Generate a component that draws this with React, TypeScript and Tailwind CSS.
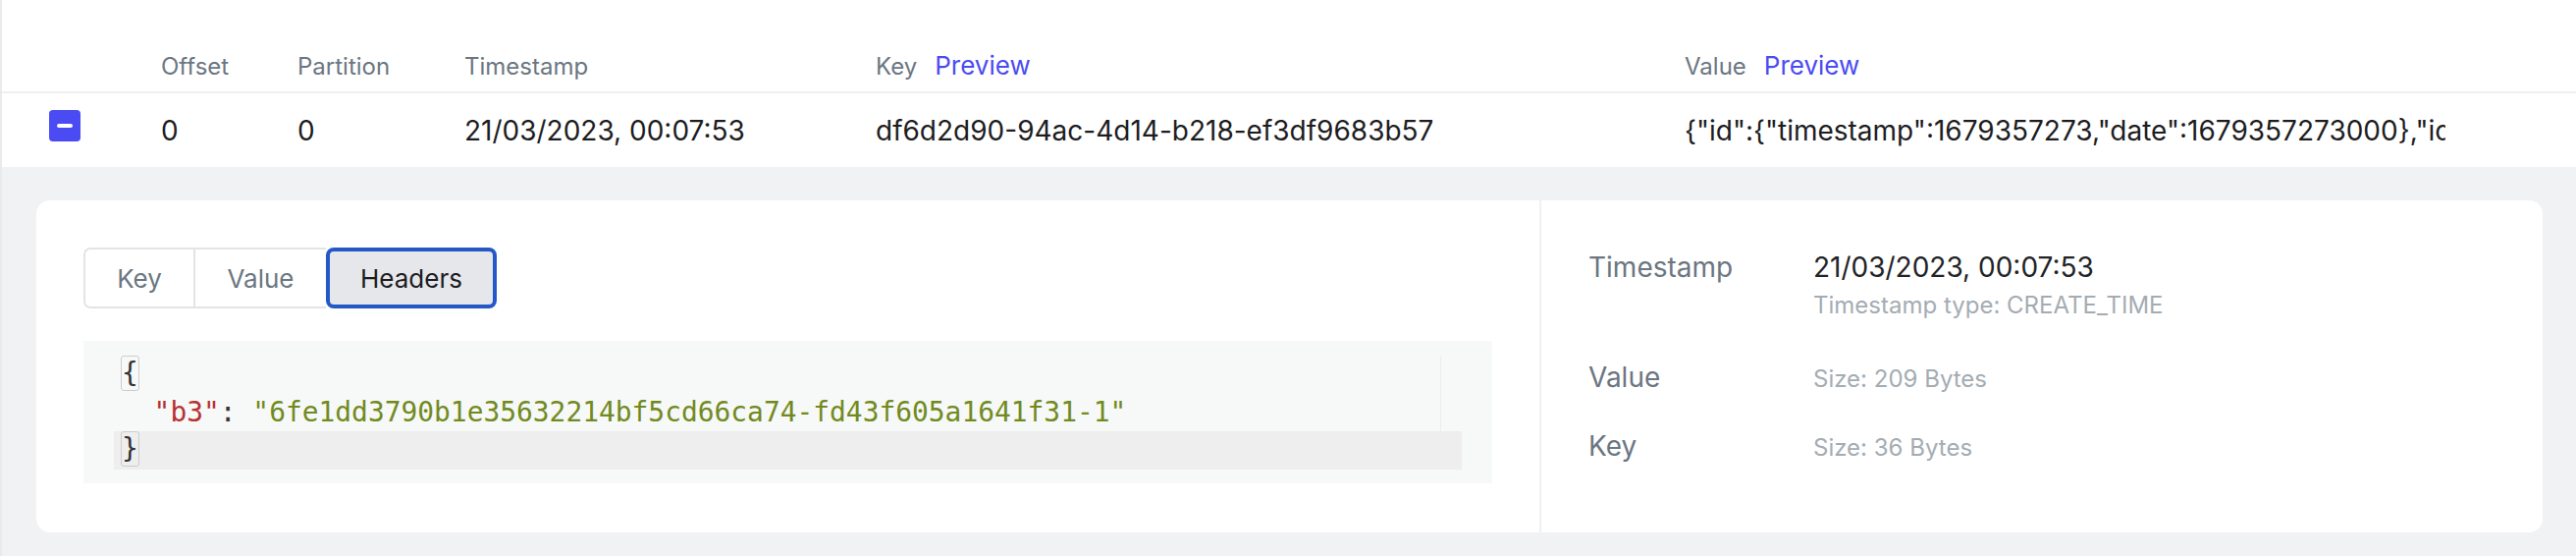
export default function App() {
  const cols = "grid grid-cols-[162px_139px_170px_419px_824px_775px_1fr]";
  return (
    <div className="w-[2624px] h-[566px] bg-white border-l-2 border-[#e9eaec] font-['Inter',sans-serif] overflow-hidden">
      <div className={`${cols} items-baseline h-[95px] pt-[47px] border-b-2 border-[#efefef] text-[24px] leading-[36px] text-[#6b7682]`}>
        <div></div>
        <div>Offset</div>
        <div>Partition</div>
        <div>Timestamp</div>
        <div className="flex items-baseline gap-[18px]">
          <span>Key</span>
          <span className="text-[26px] leading-[39px] text-[#4b4bf2]">Preview</span>
        </div>
        <div className="flex items-baseline gap-[18px]">
          <span>Value</span>
          <span className="text-[26px] leading-[39px] text-[#4b4bf2]">Preview</span>
        </div>
        <div></div>
      </div>
      <div className={`${cols} items-start h-[75px] pt-[17px] text-[28px] leading-[42px] text-[#1d1d1f]`}>
        <div className="pl-[48px]">
          <div className="w-[32px] h-[32px] rounded-[4px] bg-[#4b4bf4] flex items-center justify-center">
            <div className="w-[16px] h-[4px] rounded-full bg-white"></div>
          </div>
        </div>
        <div>0</div>
        <div>0</div>
        <div>21/03/2023, 00:07:53</div>
        <div>df6d2d90-94ac-4d14-b218-ef3df9683b57</div>
        <div className="overflow-hidden whitespace-nowrap">
          {'{"id":{"timestamp":1679357273,"date":1679357273000},"identifier":"6fe1dd3790b1e35632214bf5cd66ca74"}'}
        </div>
        <div></div>
      </div>
      <div className="bg-[#f1f2f4] h-[396px] pt-[34px] pl-[35px] pr-[34px]">
        <div className="h-[338px] bg-white rounded-[14px] flex">
          <div className="w-[1533px] shrink-0 border-r-2 border-[#eef0f2] p-[48px]">
            <div className="flex h-[62px] text-[26px] leading-[39px]">
              <div className="w-[112px] flex items-center justify-center border-2 border-r-0 border-[#e3e4e6] rounded-l-[7px] text-[#6b7682]">Key</div>
              <div className="w-[135px] flex items-center justify-center border-y-2 border-l-2 border-[#e3e4e6] text-[#6b7682]">Value</div>
              <div className="w-[174px] flex items-center justify-center border-[4px] border-[#2458c6] rounded-[8px] bg-[#e5e7eb] text-[#1d1d1f]">Headers</div>
            </div>
            <div className="mt-[33px] h-[145px] bg-[#f7f8f8] px-[31px] py-[15px] font-['DejaVu_Sans_Mono',monospace] text-[27.9px] leading-[38.5px] text-[#333333] whitespace-pre">
              <div className="w-[1352px] border-r border-[#eceeee]">
                <div className="pl-[7px] h-[38.5px]">
                  <span className="inline-block h-[36px] leading-[34px] border border-[#cdcdcd] rounded-[3px] align-top">{"{"}</span>
                </div>
                <div className="pl-[7px] h-[38.5px]">
                  {"  "}
                  <span className="text-[#b8312f]">"b3"</span>
                  <span className="text-[#333333]">: </span>
                  <span className="text-[#718a20]">"6fe1dd3790b1e35632214bf5cd66ca74-fd43f605a1641f31-1"</span>
                </div>
              </div>
              <div className="w-[1373px] pl-[7px] h-[38.5px] bg-[#eeeeee]">
                <span className="inline-block h-[36px] leading-[34px] border border-[#cdcdcd] rounded-[3px] align-top">{"}"}</span>
              </div>
            </div>
          </div>
          <div className="flex-1 pl-[48px] pt-[47px]">
            <div className="flex">
              <div className="w-[229px] text-[28px] leading-[42px] text-[#6b7682]">Timestamp</div>
              <div>
                <div className="text-[28px] leading-[42px] text-[#222326]">21/03/2023, 00:07:53</div>
                <div className="text-[24px] leading-[36px] text-[#a4acb3]">Timestamp type: CREATE_TIME</div>
              </div>
            </div>
            <div className="flex mt-[34px] items-baseline">
              <div className="w-[229px] text-[28px] leading-[42px] text-[#6b7682]">Value</div>
              <div className="text-[24px] leading-[36px] text-[#a4acb3]">Size: 209 Bytes</div>
            </div>
            <div className="flex mt-[28px] items-baseline">
              <div className="w-[229px] text-[28px] leading-[42px] text-[#6b7682]">Key</div>
              <div className="text-[24px] leading-[36px] text-[#a4acb3]">Size: 36 Bytes</div>
            </div>
          </div>
        </div>
      </div>
    </div>
  );
}
